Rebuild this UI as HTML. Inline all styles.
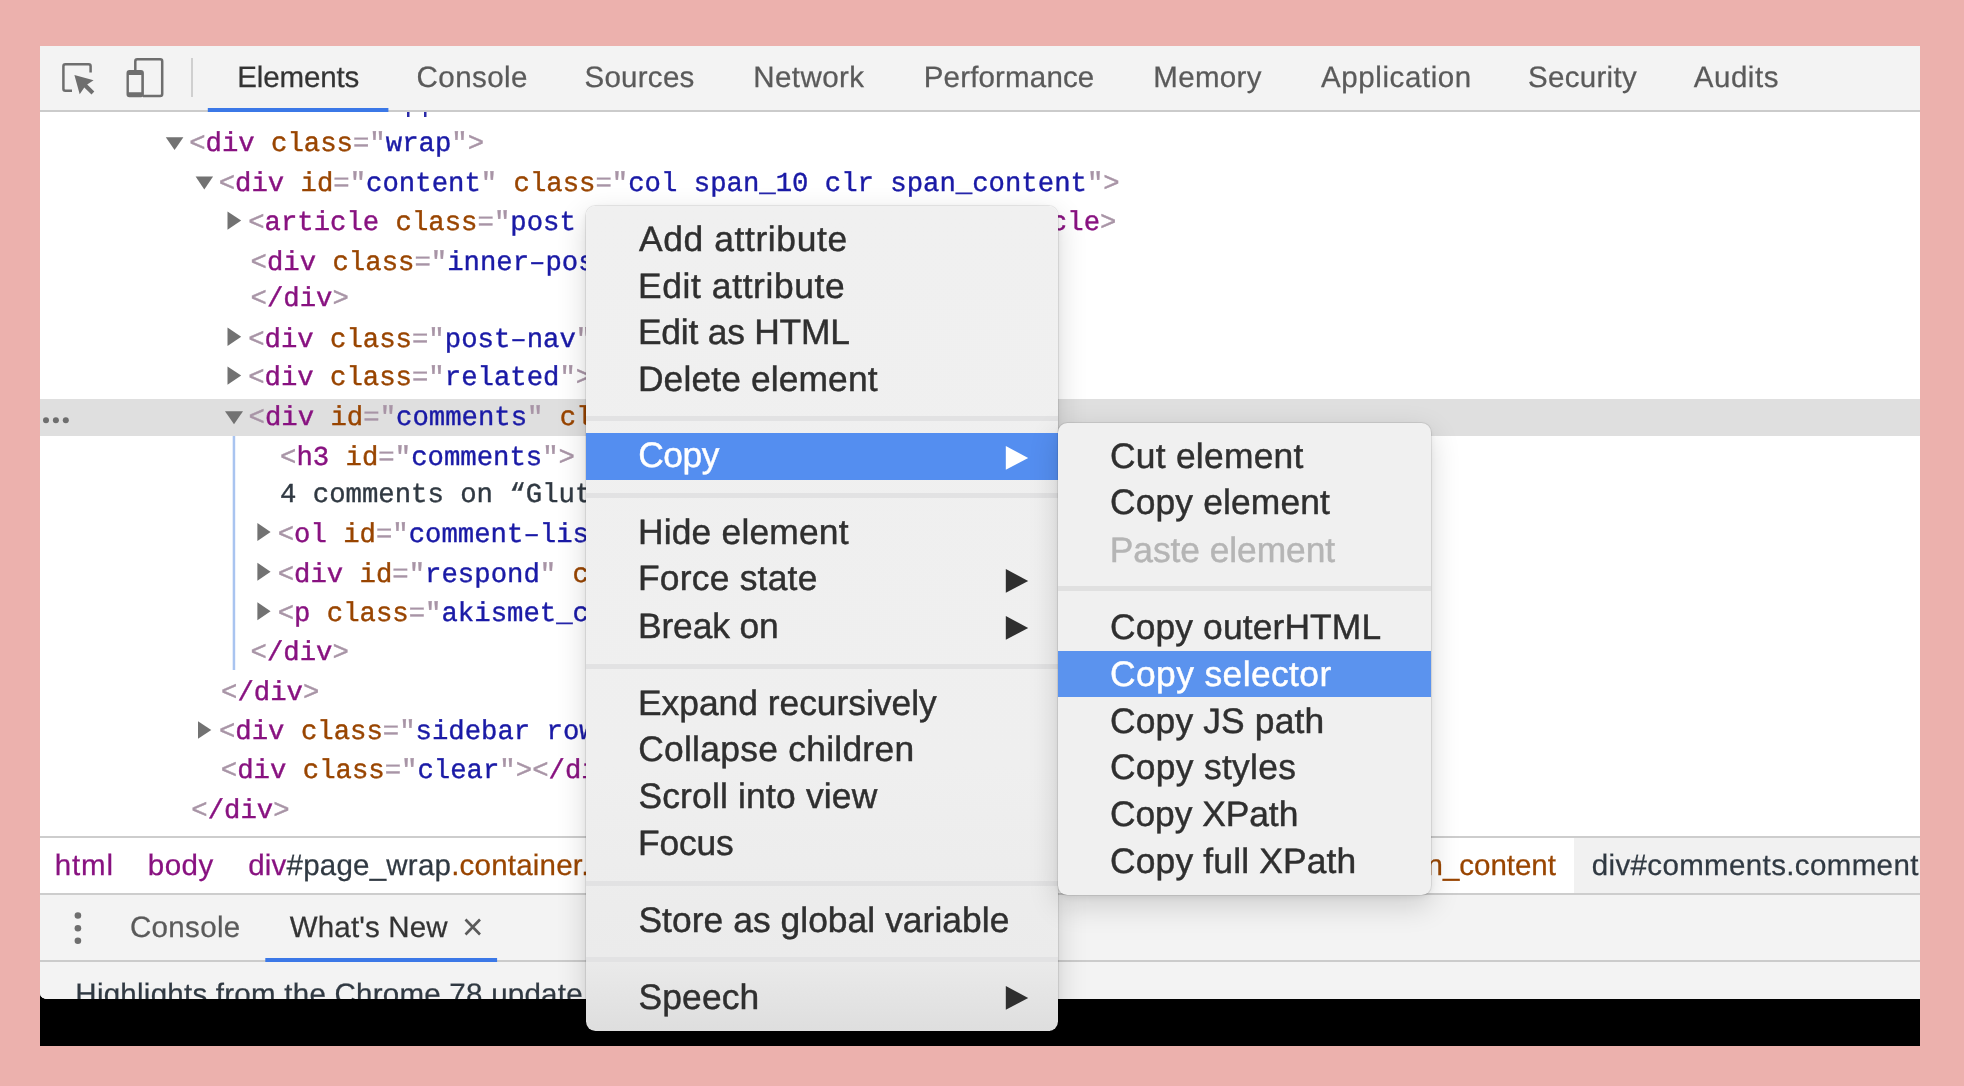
<!DOCTYPE html>
<html><head><meta charset="utf-8"><title>DevTools</title><style>
html,body{margin:0;padding:0}
body{width:1964px;height:1086px;background:#ecb1ad;position:relative;overflow:hidden;font-family:"Liberation Sans",sans-serif}
.abs{position:absolute}
.t{position:absolute;white-space:pre;line-height:1;text-rendering:geometricPrecision;font-family:"Liberation Sans",sans-serif}
.mono{font-family:"Liberation Mono",monospace;-webkit-text-stroke:0.4px}
.mn{-webkit-text-stroke:0.45px}
.tb{-webkit-text-stroke:0.25px}
.wc{will-change:transform}
.tg{color:#881280}.br{color:#a894a6}.an{color:#994500}.av{color:#1a1aa6}
#win{left:40px;top:46px;width:1880px;height:1000px;background:#000;overflow:hidden}
#dt{left:0;top:0;width:1880px;height:953px;background:#fff;border-bottom-left-radius:8px 5.500px;overflow:hidden}
#tb{left:0;top:0;width:1880px;height:64px;background:#f3f3f3;border-bottom:2px solid #cbcbcb}
#sel{left:0;top:353px;width:1880px;height:37px;background:#dfdfdf}
#bc{left:0;top:790px;width:1880px;height:59px;background:#fff;border-top:2px solid #cdcdcd;border-bottom:2px solid #cdcdcd;box-sizing:border-box}
#bcsel{left:1534px;top:792px;width:346px;height:55px;background:#f1f1f1}
#dr{left:0;top:849px;width:1880px;height:104px;background:#f3f3f3}
#drb{left:0;top:914px;width:1880px;height:2px;background:#cbcbcb}
.menu{background:#f0f0f0;border-radius:9.5px;box-shadow:0 0 0 1px rgba(0,0,0,.08),0 10px 30px rgba(0,0,0,.16),0 2px 7px rgba(0,0,0,.08);overflow:hidden}
.sep{position:absolute;left:0;right:0;height:5px;background:#e2e2e3}
.hl{position:absolute;left:0;right:0;background:#548ef0}
.tri{position:absolute;width:0;height:0;border-left:22px solid #2f2f2f;border-top:12px solid transparent;border-bottom:12px solid transparent}
</style></head><body>
<div id="win" class="abs"><div id="dt" class="abs">
<div id="tb" class="abs"></div>
<div id="sel" class="abs"></div>
<div id="bc" class="abs"></div><div id="bcsel" class="abs"></div>
<div id="dr" class="abs"></div><div id="drb" class="abs"></div>
</div></div>
<svg class="abs" style="left:0;top:0" width="1964" height="1086" viewBox="0 0 1964 1086">
<!-- inspect icon -->
<path d="M90.6 72.5 V66.2 a2 2 0 0 0 -2 -2 H65.4 a2 2 0 0 0 -2 2 V88.800 a2 2 0 0 0 2 2 H72" fill="none" stroke="#6e6e6e" stroke-width="2.5"/>
<path d="M74.4 75.1 L93.6 80.2 L87.2 84.4 L94.3 91.5 L91.5 94.5 L84.3 87.4 L79.7 94.2 Z" fill="#6e6e6e"/>
<!-- device icon -->
<path d="M135.3 70.5 V61.2 a2 2 0 0 1 2 -2 H160.200 a2 2 0 0 1 2 2 V94 a2 2 0 0 1 -2 2 H143" fill="none" stroke="#6e6e6e" stroke-width="2.5"/>
<path fill-rule="evenodd" d="M129.500 70 H140.900 a3 3 0 0 1 3 3 V94.200 a3 3 0 0 1 -3 3 H129.500 a3 3 0 0 1 -3 -3 V73 a3 3 0 0 1 3 -3 Z M128.900 74.900 V92.300 H141.300 V74.900 Z" fill="#6e6e6e"/>
<rect x="191" y="58" width="2" height="39" fill="#cfcfcf"/>
<!-- active tab underline -->
<rect x="207.800" y="108" width="180.600" height="4" fill="#3b78e7"/>
<!-- partial line remnants -->
<rect x="407" y="112" width="2.500" height="5" fill="#2a2aa8"/><rect x="424" y="112" width="2.500" height="5" fill="#2a2aa8"/>
<!-- guide -->
<rect x="232.700" y="436" width="2.500" height="234" fill="#a9c4f0"/>
<!-- dots in selected row -->
<circle cx="46" cy="420.200" r="3" fill="#6e6e6e"/><circle cx="55.900" cy="420.200" r="3" fill="#6e6e6e"/><circle cx="65.800" cy="420.200" r="3" fill="#6e6e6e"/>
<!-- drawer kebab -->
<circle cx="77.900" cy="915.500" r="3.300" fill="#6e6e6e"/><circle cx="77.900" cy="928.200" r="3.300" fill="#6e6e6e"/><circle cx="77.900" cy="940.800" r="3.300" fill="#6e6e6e"/>
<!-- close x -->
<path d="M465.500 919.500 L480 934.500 M480 919.500 L465.500 934.500" stroke="#5a5a5a" stroke-width="2.600" fill="none"/>
<rect x="265.300" y="958" width="231.800" height="4" fill="#3b78e7"/>

<path d="M165.8 137.2 H183.4 L174.6 149.9 Z" fill="#727272"/>
<path d="M195.6 176.4 H213.1 L204.3 189.4 Z" fill="#727272"/>
<path d="M225.0 411.2 H243.0 L234.0 424.2 Z" fill="#727272"/>
<path d="M227.5 211.4 V229.8 L241.2 220.6 Z" fill="#727272"/>
<path d="M227.5 327.5 V345.9 L241.2 336.7 Z" fill="#727272"/>
<path d="M227.5 366.4 V384.8 L241.2 375.6 Z" fill="#727272"/>
<path d="M257.4 523.1 V541.1 L270.6 532.1 Z" fill="#727272"/>
<path d="M257.4 562.8 V580.8 L270.6 571.8 Z" fill="#727272"/>
<path d="M257.4 602.2 V620.2 L270.6 611.2 Z" fill="#727272"/>
<path d="M198.0 721.3 V738.7 L211.3 730.0 Z" fill="#727272"/>
</svg>
<div class="abs wc" style="left:40px;top:46px;width:1880px;height:953px;overflow:hidden"><div class="abs" style="left:-40px;top:-46px">
<div id="t_el" class="t tb" style="left:237.15px;top:63px;font-size:29.50px;color:#333;letter-spacing:-0.107px;">Elements</div>
<div id="t_co" class="t tb" style="left:416.55px;top:63px;font-size:29.50px;color:#5a5a5a;letter-spacing:0.458px;">Console</div>
<div id="t_so" class="t tb" style="left:584.45px;top:63px;font-size:29.50px;color:#5a5a5a;letter-spacing:0.275px;">Sources</div>
<div id="t_ne" class="t tb" style="left:753.25px;top:63px;font-size:29.50px;color:#5a5a5a;letter-spacing:0.442px;">Network</div>
<div id="t_pe" class="t tb" style="left:923.75px;top:63px;font-size:29.50px;color:#5a5a5a;letter-spacing:0.165px;">Performance</div>
<div id="t_me" class="t tb" style="left:1153.35px;top:63px;font-size:29.50px;color:#5a5a5a;letter-spacing:0.320px;">Memory</div>
<div id="t_ap" class="t tb" style="left:1321.10px;top:63px;font-size:29.50px;color:#5a5a5a;letter-spacing:0.580px;">Application</div>
<div id="t_se" class="t tb" style="left:1527.95px;top:63px;font-size:29.50px;color:#5a5a5a;letter-spacing:0.321px;">Security</div>
<div id="t_au" class="t tb" style="left:1693.70px;top:63px;font-size:29.50px;color:#5a5a5a;letter-spacing:0.560px;">Audits</div>
<div id="b_html" class="t tb" style="left:54.70px;top:851px;font-size:29.50px;color:#881280;letter-spacing:0.900px;">html</div>
<div id="b_body" class="t tb" style="left:147.65px;top:851px;font-size:29.50px;color:#881280;letter-spacing:0.583px;">body</div>
<div id="b_div" class="t tb" style="left:248.20px;top:851px;font-size:29.50px;color:#303942;letter-spacing:0.22px;"><span style="color:#881280">div</span><span style="color:#303942">#page_wrap</span><span style="color:#994500">.container.col</span></div>
<div id="b_nc" class="t tb" style="left:1426.55px;top:851px;font-size:29.50px;color:#994500;letter-spacing:-0.031px;">n_content</div>
<div id="b_cm" class="t tb" style="left:1591.70px;top:851px;font-size:29.50px;color:#303942;letter-spacing:0.368px;">div#comments.comment</div>
<div id="d_co" class="t tb" style="left:129.95px;top:913px;font-size:29.50px;color:#5a5a5a;letter-spacing:0.350px;">Console</div>
<div id="d_wn" class="t tb" style="left:289.80px;top:913px;font-size:29.50px;color:#333;letter-spacing:0.144px;">What's New</div>
<div id="d_hl" class="t tb" style="left:75.35px;top:980px;font-size:29.50px;color:#303942;letter-spacing:0.251px;">Highlights from the Chrome 78 update</div>
<div id="l0" class="t mono" style="left:189.15px;top:131px;font-size:27.30px;color:#303942;"><span class="br">&lt;</span><span class="tg">div</span> <span class="an">class</span><span class="br">="</span><span class="av">wrap</span><span class="br">"</span><span class="br">&gt;</span></div>
<div id="l1" class="t mono" style="left:218.65px;top:171px;font-size:27.30px;color:#303942;"><span class="br">&lt;</span><span class="tg">div</span> <span class="an">id</span><span class="br">="</span><span class="av">content</span><span class="br">"</span> <span class="an">class</span><span class="br">="</span><span class="av">col span_10 clr span_content</span><span class="br">"</span><span class="br">&gt;</span></div>
<div id="l2" class="t mono" style="left:248.15px;top:210px;font-size:27.30px;color:#303942;"><span class="br">&lt;</span><span class="tg">article</span> <span class="an">class</span><span class="br">="</span><span class="av">post clr type-post entry</span><span class="br">"</span><span class="br">&gt;</span><span style="color:#303942">…</span><span class="br">&lt;</span><span class="tg">/article</span><span class="br">&gt;</span></div>
<div id="l3" class="t mono" style="left:250.55px;top:250px;font-size:27.30px;color:#303942;"><span class="br">&lt;</span><span class="tg">div</span> <span class="an">class</span><span class="br">="</span><span class="av">inner–post clr</span><span class="br">"</span><span class="br">&gt;</span></div>
<div id="l4" class="t mono" style="left:250.55px;top:286px;font-size:27.30px;color:#303942;"><span class="br">&lt;</span><span class="tg">/div</span><span class="br">&gt;</span></div>
<div id="l5" class="t mono" style="left:248.15px;top:327px;font-size:27.30px;color:#303942;"><span class="br">&lt;</span><span class="tg">div</span> <span class="an">class</span><span class="br">="</span><span class="av">post–nav</span><span class="br">"</span><span class="br">&gt;</span>…<span class="br">&lt;</span><span class="tg">/div</span><span class="br">&gt;</span></div>
<div id="l6" class="t mono" style="left:248.15px;top:365px;font-size:27.30px;color:#303942;"><span class="br">&lt;</span><span class="tg">div</span> <span class="an">class</span><span class="br">="</span><span class="av">related</span><span class="br">"</span><span class="br">&gt;</span>…<span class="br">&lt;</span><span class="tg">/div</span><span class="br">&gt;</span></div>
<div id="l7" class="t mono" style="left:248.55px;top:405px;font-size:27.30px;color:#303942;"><span class="br">&lt;</span><span class="tg">div</span> <span class="an">id</span><span class="br">="</span><span class="av">comments</span><span class="br">"</span> <span class="an">class</span><span class="br">="</span><span class="av">comments–area</span><span class="br">"</span><span class="br">&gt;</span></div>
<div id="l8" class="t mono" style="left:280.05px;top:445px;font-size:27.30px;color:#303942;"><span class="br">&lt;</span><span class="tg">h3</span> <span class="an">id</span><span class="br">="</span><span class="av">comments</span><span class="br">"</span><span class="br">&gt;</span></div>
<div id="l9" class="t mono" style="left:280.05px;top:482px;font-size:27.30px;color:#303942;"><span style="color:#303942">4 comments on “Gluten free”</span></div>
<div id="l10" class="t mono" style="left:277.65px;top:522px;font-size:27.30px;color:#303942;"><span class="br">&lt;</span><span class="tg">ol</span> <span class="an">id</span><span class="br">="</span><span class="av">comment–list</span><span class="br">"</span><span class="br">&gt;</span></div>
<div id="l11" class="t mono" style="left:277.65px;top:562px;font-size:27.30px;color:#303942;"><span class="br">&lt;</span><span class="tg">div</span> <span class="an">id</span><span class="br">="</span><span class="av">respond</span><span class="br">"</span> <span class="an">class</span><span class="br">="</span><span class="av">comment–respond</span><span class="br">"</span><span class="br">&gt;</span></div>
<div id="l12" class="t mono" style="left:277.65px;top:601px;font-size:27.30px;color:#303942;"><span class="br">&lt;</span><span class="tg">p</span> <span class="an">class</span><span class="br">="</span><span class="av">akismet_comment_form_privacy_notice</span><span class="br">"</span><span class="br">&gt;</span></div>
<div id="l13" class="t mono" style="left:250.55px;top:640px;font-size:27.30px;color:#303942;"><span class="br">&lt;</span><span class="tg">/div</span><span class="br">&gt;</span></div>
<div id="l14" class="t mono" style="left:221.05px;top:680px;font-size:27.30px;color:#303942;"><span class="br">&lt;</span><span class="tg">/div</span><span class="br">&gt;</span></div>
<div id="l15" class="t mono" style="left:218.95px;top:719px;font-size:27.30px;color:#303942;"><span class="br">&lt;</span><span class="tg">div</span> <span class="an">class</span><span class="br">="</span><span class="av">sidebar row</span><span class="br">"</span><span class="br">&gt;</span></div>
<div id="l16" class="t mono" style="left:220.85px;top:758px;font-size:27.30px;color:#303942;"><span class="br">&lt;</span><span class="tg">div</span> <span class="an">class</span><span class="br">="</span><span class="av">clear</span><span class="br">"</span><span class="br">&gt;</span><span class="br">&lt;</span><span class="tg">/div</span><span class="br">&gt;</span></div>
<div id="l17" class="t mono" style="left:191.25px;top:798px;font-size:27.30px;color:#303942;"><span class="br">&lt;</span><span class="tg">/div</span><span class="br">&gt;</span></div>
</div></div>
<div class="abs" style="left:40px;top:46px;width:1880px;height:1000px;overflow:hidden"><div class="abs" style="left:-40px;top:-46px;width:1964px;height:1086px">
<div id="menu" class="abs menu wc" style="left:586px;top:206px;width:472px;height:825px;background:linear-gradient(#f0f0f0 0,#efefef 560px,#ebebeb 750px,#dedede 825px)"><div class="abs" style="left:-586px;top:-206px">
<div class="hl" style="left:586px;width:472px;top:433px;height:46.800px"></div>
<div class="sep" style="left:586px;width:472px;top:415.8px"></div>
<div class="sep" style="left:586px;width:472px;top:492.5px"></div>
<div class="sep" style="left:586px;width:472px;top:663.5px"></div>
<div class="sep" style="left:586px;width:472px;top:881.0px"></div>
<div class="sep" style="left:586px;width:472px;top:957.2px"></div>
<div id="m0" class="t mn" style="left:638.95px;top:222px;font-size:35.40px;color:#2f2f2f;letter-spacing:0.621px;">Add attribute</div>
<div id="m1" class="t mn" style="left:637.95px;top:269px;font-size:35.40px;color:#2f2f2f;letter-spacing:0.623px;">Edit attribute</div>
<div id="m2" class="t mn" style="left:637.95px;top:315px;font-size:35.40px;color:#2f2f2f;letter-spacing:-0.214px;">Edit as HTML</div>
<div id="m3" class="t mn" style="left:637.95px;top:362px;font-size:35.40px;color:#2f2f2f;letter-spacing:0.119px;">Delete element</div>
<div id="m4" class="t mn" style="left:638.20px;top:438px;font-size:35.40px;color:#fff;letter-spacing:-0.417px;">Copy</div>
<div id="m5" class="t mn" style="left:637.95px;top:515px;font-size:35.40px;color:#2f2f2f;letter-spacing:0.191px;">Hide element</div>
<div id="m6" class="t mn" style="left:637.95px;top:561px;font-size:35.40px;color:#2f2f2f;letter-spacing:0.235px;">Force state</div>
<div id="m7" class="t mn" style="left:637.95px;top:609px;font-size:35.40px;color:#2f2f2f;letter-spacing:-0.114px;">Break on</div>
<div id="m8" class="t mn" style="left:637.95px;top:686px;font-size:35.40px;color:#2f2f2f;letter-spacing:-0.009px;">Expand recursively</div>
<div id="m9" class="t mn" style="left:638.20px;top:732px;font-size:35.40px;color:#2f2f2f;letter-spacing:0.275px;">Collapse children</div>
<div id="m10" class="t mn" style="left:638.45px;top:779px;font-size:35.40px;color:#2f2f2f;letter-spacing:0.187px;">Scroll into view</div>
<div id="m11" class="t mn" style="left:637.95px;top:826px;font-size:35.40px;color:#2f2f2f;letter-spacing:-0.125px;">Focus</div>
<div id="m12" class="t mn" style="left:638.45px;top:903px;font-size:35.40px;color:#2f2f2f;letter-spacing:0.048px;">Store as global variable</div>
<div id="m13" class="t mn" style="left:638.45px;top:980px;font-size:35.40px;color:#2f2f2f;letter-spacing:0.160px;">Speech</div>
<svg class="abs" style="left:1005px;top:445.6px" width="24" height="24" viewBox="0 0 24 24"><path d="M0.8 0 V23.800 L23.200 11.900 Z" fill="#fff"/></svg>
<svg class="abs" style="left:1005px;top:568.8px" width="24" height="24" viewBox="0 0 24 24"><path d="M0.8 0 V23.800 L23.200 11.900 Z" fill="#2f2f2f"/></svg>
<svg class="abs" style="left:1005px;top:615.9px" width="24" height="24" viewBox="0 0 24 24"><path d="M0.8 0 V23.800 L23.200 11.900 Z" fill="#2f2f2f"/></svg>
<svg class="abs" style="left:1005px;top:986.2px" width="24" height="24" viewBox="0 0 24 24"><path d="M0.8 0 V23.800 L23.200 11.900 Z" fill="#2f2f2f"/></svg>
</div></div>
<div id="sub" class="abs menu wc" style="left:1058px;top:423px;width:373px;height:472px;background:#f0f0f0"><div class="abs" style="left:-1058px;top:-423px">
<div class="hl" style="left:1058px;width:373px;top:650.800px;height:46.400px;background:#5b93ee"></div>
<div class="sep" style="left:1058px;width:373px;top:586.300px;background:#e0e0e0"></div>
<div id="s0" class="t mn" style="left:1110.00px;top:439px;font-size:35.40px;color:#2f2f2f;letter-spacing:0.255px;">Cut element</div>
<div id="s1" class="t mn" style="left:1110.00px;top:485px;font-size:35.40px;color:#2f2f2f;letter-spacing:0.145px;">Copy element</div>
<div id="s2" class="t mn" style="left:1109.75px;top:533px;font-size:35.40px;color:#b5b5b5;letter-spacing:-0.071px;">Paste element</div>
<div id="s3" class="t mn" style="left:1110.00px;top:610px;font-size:35.40px;color:#2f2f2f;letter-spacing:0.127px;">Copy outerHTML</div>
<div id="s4" class="t mn" style="left:1110.00px;top:657px;font-size:35.40px;color:#fff;letter-spacing:0.404px;">Copy selector</div>
<div id="s5" class="t mn" style="left:1110.00px;top:704px;font-size:35.40px;color:#2f2f2f;letter-spacing:0.155px;">Copy JS path</div>
<div id="s6" class="t mn" style="left:1110.00px;top:750px;font-size:35.40px;color:#2f2f2f;letter-spacing:0.305px;">Copy styles</div>
<div id="s7" class="t mn" style="left:1110.00px;top:797px;font-size:35.40px;color:#2f2f2f;letter-spacing:-0.061px;">Copy XPath</div>
<div id="s8" class="t mn" style="left:1110.00px;top:844px;font-size:35.40px;color:#2f2f2f;letter-spacing:0.168px;">Copy full XPath</div>
</div></div>
</div></div>
</body></html>
